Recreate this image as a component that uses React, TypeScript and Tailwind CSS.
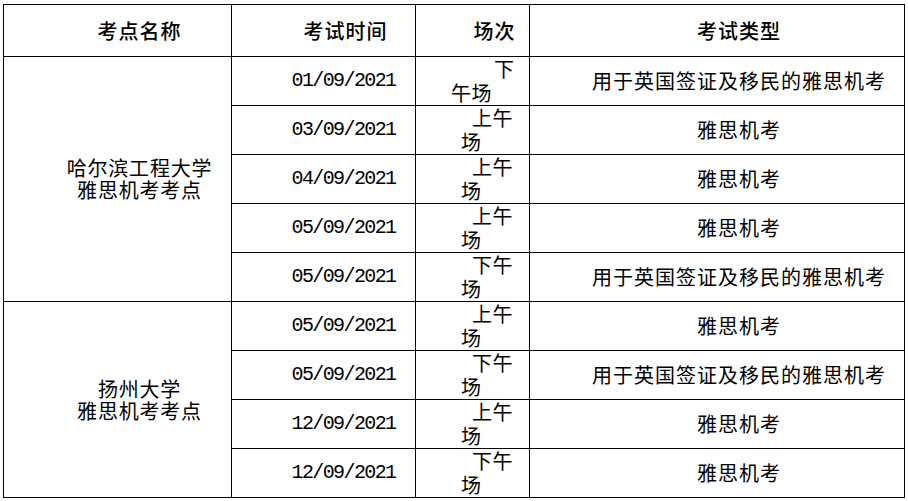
import React from "react";

const cjk = { fontFamily: '"Noto Sans CJK SC", sans-serif' };
const mono = { fontFamily: '"Liberation Mono", monospace' };

type Row = { date: string; s1: string; s2: string; first?: boolean; type: string };

const groupA: Row[] = [
  { date: "01/09/2021", s1: "下", s2: "午场", first: true, type: "用于英国签证及移民的雅思机考" },
  { date: "03/09/2021", s1: "上午", s2: "场", type: "雅思机考" },
  { date: "04/09/2021", s1: "上午", s2: "场", type: "雅思机考" },
  { date: "05/09/2021", s1: "上午", s2: "场", type: "雅思机考" },
  { date: "05/09/2021", s1: "下午", s2: "场", type: "用于英国签证及移民的雅思机考" },
];
const groupB: Row[] = [
  { date: "05/09/2021", s1: "上午", s2: "场", type: "雅思机考" },
  { date: "05/09/2021", s1: "下午", s2: "场", type: "用于英国签证及移民的雅思机考" },
  { date: "12/09/2021", s1: "上午", s2: "场", type: "雅思机考" },
  { date: "12/09/2021", s1: "下午", s2: "场", type: "雅思机考" },
];

function DataCells({ r }: { r: Row }) {
  return (
    <>
      <td className="border border-black h-[49px] p-0 pl-[40px] text-center align-middle">
        <span className="text-[20px] tracking-[-1.6px] text-black" style={mono}>{r.date}</span>
      </td>
      <td className="border border-black h-[49px] p-0 pl-[35px] text-left align-middle">
        <div className="text-[20px] leading-[24px] tracking-[0.5px] text-black" style={cjk}>
          <div className={r.first ? "pl-[43px]" : "pl-[21px]"}>{r.s1}</div>
          <div className={r.first ? "pl-0" : "pl-[10px]"}>{r.s2}</div>
        </div>
      </td>
      <td className="border border-black h-[49px] p-0 pl-[44px] text-center align-middle">
        <span className="text-[20px] tracking-[1px] text-black" style={cjk}>{r.type}</span>
      </td>
    </>
  );
}

function Group({ rows, l1, l2 }: { rows: Row[]; l1: string; l2: string }) {
  return (
    <>
      {rows.map((r, i) => (
        <tr key={i}>
          {i === 0 && (
            <td rowSpan={rows.length} className="border border-black p-0 pl-[44px] text-center align-middle">
              <div className="text-[20px] leading-[22px] tracking-[0.8px] text-black" style={cjk}>
                {l1}
                <br />
                {l2}
              </div>
            </td>
          )}
          <DataCells r={r} />
        </tr>
      ))}
    </>
  );
}

export default function App() {
  const th = "border border-black h-[52px] p-0 pl-[44px] text-center align-middle text-[20px] tracking-[1px] font-medium text-black";
  return (
    <div className="w-[908px] h-[501px] bg-white pl-[3px] pt-[4px]">
      <table className="border-collapse table-fixed w-[901px]">
        <colgroup>
          <col className="w-[228px]" />
          <col className="w-[184px]" />
          <col className="w-[114px]" />
          <col className="w-[375px]" />
        </colgroup>
        <tbody>
          <tr>
            <td className={th} style={cjk}>考点名称</td>
            <td className={th} style={cjk}>考试时间</td>
            <td className={th} style={cjk}>场次</td>
            <td className={th} style={cjk}>考试类型</td>
          </tr>
          <Group rows={groupA} l1="哈尔滨工程大学" l2="雅思机考考点" />
          <Group rows={groupB} l1="扬州大学" l2="雅思机考考点" />
        </tbody>
      </table>
    </div>
  );
}
